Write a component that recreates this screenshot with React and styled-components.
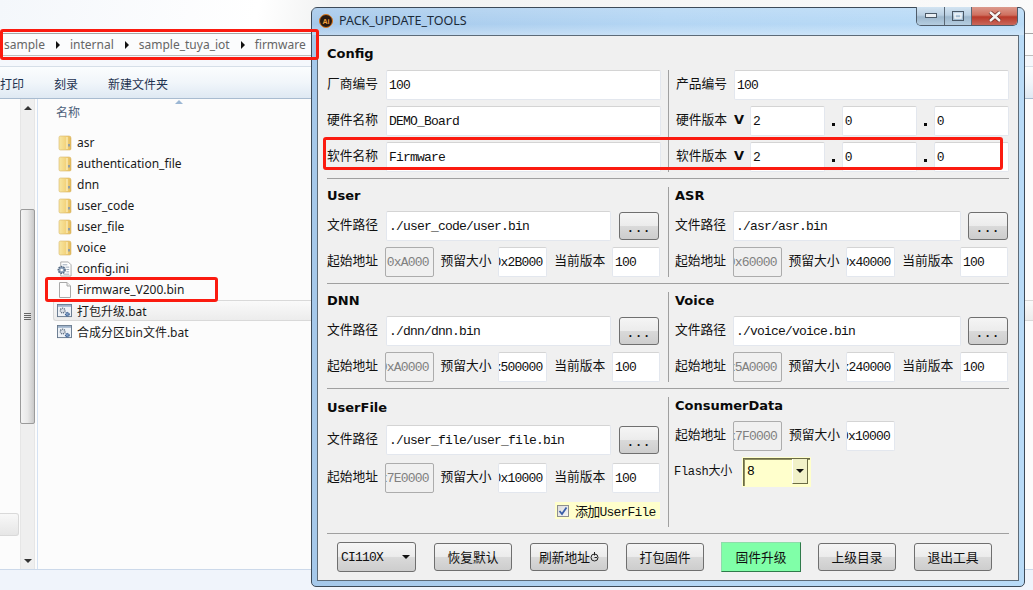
import React from 'react';
import styled, { createGlobalStyle } from 'styled-components';

const CJK = '"Noto Sans CJK SC"';
const UI_FONT = `"Noto Sans", ${CJK}, sans-serif`;
const MONO_FONT = `"Liberation Mono", ${CJK}, monospace`;

const GlobalStyle = createGlobalStyle`
  html, body { margin: 0; padding: 0; background: #fff; }
  * { box-sizing: border-box; }
`;

const Screen = styled.div`
  position: relative;
  width: 1033px;
  height: 590px;
  overflow: hidden;
  font-family: ${UI_FONT};
`;

/* explorer behind the tool window */
const Explorer = styled.div`
  display: flex;
  flex-direction: column;
  height: 590px;
`;

const ExplorerGlass = styled.div`
  height: 33px;
  background: linear-gradient(100deg, #f4f7fb 0%, #ffffff 25%, #f1f2f2 32%, #fafafa 100%);
`;

const AddressBar = styled.div`
  height: 23px;
  display: flex;
  align-items: center;
  padding-left: 4px;
  gap: 8px;
  background: #fbfcfd;
  border-top: 1px solid #a5a5a5;
  border-bottom: 1px solid #bdbdbd;
  font-size: 12px;
  color: #666;
`;

const Crumb = styled.span`
  white-space: nowrap;
`;

const CrumbArrow = styled.span`
  width: 0;
  height: 0;
  margin: 0 2px 0 3px;
  border-left: 4px solid #111;
  border-top: 4px solid transparent;
  border-bottom: 4px solid transparent;
`;

const GlassGap = styled.div`
  height: 10px;
  background: #f5f8fc;
`;

const Toolbar = styled.div`
  height: 33px;
  display: flex;
  align-items: center;
  gap: 30px;
  padding-top: 2px;
  background: linear-gradient(#fbfdfe 0%, #f1f6fa 50%, #dfe9f3 100%);
  border-top: 1px solid #d6dfe8;
  border-bottom: 1px solid #a9bcd0;
  font-size: 12px;
  color: #1e3250;
`;

const Body = styled.div`
  flex: 1;
  display: flex;
  background: #fcfcfc;
  min-height: 0;
`;

const NavPane = styled.div`
  width: 20px;
  padding-top: 414px;
`;

const NavSelected = styled.div`
  width: 19px;
  height: 23px;
  border: 1px solid #d9d9d9;
  border-left: 0;
  border-radius: 0 3px 3px 0;
  background: linear-gradient(#f8f8f8, #e6e6e6);
`;

const ScrollTrack = styled.div`
  width: 15px;
  display: flex;
  flex-direction: column;
  align-items: center;
  background: #efefef;
  border-left: 1px solid #e6e6e6;
  border-right: 1px solid #e6e6e6;
`;

const ScrollUp = styled.div`
  margin-top: 7px;
  border-bottom: 4px solid #333;
  border-left: 4px solid transparent;
  border-right: 4px solid transparent;
`;

const ScrollThumb = styled.div`
  width: 15px;
  height: 215px;
  margin-top: 99px;
  display: flex;
  flex-direction: column;
  align-items: center;
  justify-content: center;
  gap: 1px;
  border: 1px solid #9b9b9b;
  border-radius: 2px;
  background: linear-gradient(90deg, #f4f4f4 0%, #e9e9e9 50%, #c9c9c9 100%);
`;

const Grip = styled.i`
  display: block;
  width: 7px;
  height: 1px;
  background: #666;
`;

const ScrollDown = styled.div`
  margin-top: auto;
  margin-bottom: 6px;
  border-top: 4px solid #333;
  border-left: 4px solid transparent;
  border-right: 4px solid transparent;
`;

const FileList = styled.div`
  flex: 1;
  margin-left: 2px;
  padding-left: 15px;
  border-left: 1px solid #d5e2f3;
`;

const ListHeader = styled.div`
  position: relative;
  height: 33px;
  padding: 5px 0 0 3px;
  font-size: 12px;
  line-height: 18px;
  color: #4c607a;
`;

const SortArrow = styled.div`
  position: absolute;
  left: 122px;
  top: 1px;
  border-bottom: 4px solid #9cb7d4;
  border-left: 4px solid transparent;
  border-right: 4px solid transparent;
`;

const FileRow = styled.div`
  height: 21px;
  display: flex;
  align-items: center;
  gap: 5px;
  padding-left: 3px;
  font-size: 12px;
  color: #1a1a1a;
  white-space: nowrap;
  border: 1px solid ${(p) => (p.$hover ? '#d9d9d9' : 'transparent')};
  border-right: 0;
  border-radius: 3px 0 0 3px;
  background: ${(p) => (p.$hover ? 'linear-gradient(#fafafa, #ececec)' : 'none')};
`;

const IconSlot = styled.div`
  flex: none;
  width: 15px;
  display: flex;
  justify-content: center;
`;

const StatusBar = styled.div`
  height: 21px;
  background: #f0f4fb;
  border-top: 1px solid #ccd9ea;
`;

const RedBox = styled.div`
  position: absolute;
  left: ${(p) => p.$x}px;
  top: ${(p) => p.$y}px;
  width: ${(p) => p.$w}px;
  height: ${(p) => p.$h}px;
  border: 3px solid #fb1b10;
  border-radius: 3px;
  z-index: 5;
  pointer-events: none;
`;

/* PACK_UPDATE_TOOLS window */
const ToolWindow = styled.div`
  position: absolute;
  left: 311px;
  top: 7px;
  width: 714px;
  height: 580px;
  display: flex;
  flex-direction: column;
  padding: 0 5px 5px;
  border: 1px solid #3d4a58;
  border-radius: 6px 6px 5px 5px;
  background: linear-gradient(90deg, #a5c8ea 0%, #b4d6f4 50%, #b9dbf7 100%);
`;

const TitleBar = styled.div`
  height: 27px;
  display: flex;
  align-items: flex-start;
  margin: 0 -5px;
  padding: 0 6px 0 7px;
  background: linear-gradient(rgba(255, 255, 255, 0.15), rgba(255, 255, 255, 0) 60%, rgba(255, 255, 255, 0.3));
`;

const AppIcon = styled.div`
  width: 14px;
  height: 14px;
  margin-top: 6px;
  border-radius: 50%;
  display: flex;
  align-items: center;
  justify-content: center;
  background: #2a1a10;
  border: 1px solid #e07a1c;
  color: #f5a13a;
  font-size: 7px;
  font-weight: 700;
  font-family: "Liberation Sans", sans-serif;
`;

const TitleText = styled.div`
  margin: 4px 0 0 6px;
  font-size: 12.5px;
  line-height: 18px;
  color: #1b2a38;
  flex: 1;
`;

const Controls = styled.div`
  display: flex;
  height: 19px;
  margin-top: -1px;
  border: 1px solid #4f5c6a;
  border-top: 0;
  border-radius: 0 0 5px 5px;
  overflow: hidden;
`;

const CtrlButton = styled.div`
  width: ${(p) => (p.$close ? 46 : 27)}px;
  display: flex;
  align-items: center;
  justify-content: center;
  border-left: ${(p) => (p.$first ? 0 : '1px solid #5a6876')};
  background: ${(p) =>
    p.$close
      ? 'linear-gradient(#dc9a8d 0%, #cf6f5f 45%, #b9392a 55%, #c9675a 100%)'
      : 'linear-gradient(#d3e4f2 0%, #b9cfe2 45%, #9db7cd 55%, #b5cde0 100%)'};
`;

const Client = styled.div`
  height: 546px;
  padding: 8px 9px 0;
  border: 1px solid #5d6b78;
  background: #f0f0f0;
`;

const SectionGrid = styled.div`
  display: grid;
  grid-template-columns: 341px 341px;
`;

const LeftCol = styled.div`
  padding-right: 7px;
`;

const RightCol = styled.div`
  border-left: 1px solid #a0a0a0;
  padding-left: ${(p) => p.$pad || 6}px;
`;

const Heading = styled.div`
  height: ${(p) => p.$h || 18}px;
  margin-bottom: 6px;
  line-height: ${(p) => p.$h || 18}px;
  font-family: "DejaVu Sans", sans-serif;
  font-size: 13px;
  font-weight: 700;
  color: #0a0a0a;
`;

const Stack = styled.div`
  display: flex;
  flex-direction: column;
  gap: ${(p) => p.$gap || 6}px;
`;

const Rule = styled.div`
  height: 1px;
  margin: 6px 0 8px;
  background: #a0a0a0;
`;

const Row = styled.div`
  height: 30px;
  display: flex;
  align-items: center;
  gap: ${(p) => p.$gap || 0}px;
`;

const SpreadRow = styled(Row)`
  justify-content: space-between;
  width: 333px;
`;

const PathRow = styled(Row)`
  padding-right: ${(p) => p.$end}px;
`;

const FieldLabel = styled.div`
  flex: none;
  width: 51px;
  margin-left: ${(p) => p.$left || 0}px;
  font-size: 12.75px;
  line-height: 16px;
  color: #111;
  white-space: nowrap;
  font-family: ${MONO_FONT};
`;

const FlashLabel = styled(FieldLabel)`
  width: 58px;
  margin-left: -1px;
  font-size: 12px;
  letter-spacing: -0.3px;
`;

const Field = styled.div`
  display: flex;
  align-items: center;
  justify-content: ${(p) => (p.$end ? 'flex-end' : 'flex-start')};
  flex: ${(p) => (p.$w ? 'none' : 1)};
  width: ${(p) => (p.$w ? `${p.$w}px` : 'auto')};
  min-width: 0;
  height: 30px;
  margin-left: ${(p) => p.$left || 0}px;
  padding: 0 ${(p) => (p.$end ? 4 : 3)}px 0 ${(p) => (p.$end ? 0 : 2)}px;
  overflow: hidden;
  white-space: nowrap;
  font-family: ${MONO_FONT};
  font-size: 13px;
  letter-spacing: -0.8px;
  border-radius: 2px;
  color: ${(p) => (p.$off ? '#808080' : '#101010')};
  background: ${(p) => (p.$off ? '#f0f0f0' : '#fff')};
  border: 1px solid ${(p) => (p.$off ? '#acacac' : '#e3e7ee')};
  border-top-color: ${(p) => (p.$off ? '#acacac' : '#d4d4d4')};
`;

const VMark = styled.div`
  flex: none;
  width: 16px;
  padding-bottom: 3px;
  font-family: "DejaVu Sans", sans-serif;
  font-weight: 700;
  font-size: 13px;
  margin-left: 7px;
  color: #0a0a0a;
`;

const Dot = styled.div`
  flex: none;
  width: 16.5px;
  height: 30px;
  display: flex;
  align-items: flex-end;
  justify-content: center;
  padding-bottom: 10px;
`;

const DotMark = styled.i`
  display: block;
  width: 3px;
  height: 3px;
  background: #0a0a0a;
`;

const GlossButton = styled.div`
  flex: none;
  display: flex;
  align-items: center;
  justify-content: center;
  width: ${(p) => p.$w || 78}px;
  height: 28px;
  padding-bottom: 1px;
  border: 1px solid #6f6f6f;
  border-radius: 3px;
  font-size: 12.75px;
  color: #111;
  white-space: nowrap;
  background: linear-gradient(#f5f5f5 0%, #ececec 48%, #d9d9d9 52%, #cdcdcd 100%);
`;

const DotsButton = styled(GlossButton)`
  font-family: ${MONO_FONT};
  font-weight: 700;
  font-size: 12px;
  letter-spacing: 1px;
  padding: 5px 0 0;
`;

const ComboButton = styled(GlossButton)`
  justify-content: space-between;
  height: 30px;
  padding: 0 5px 0 3px;
  font-family: ${MONO_FONT};
  font-size: 13px;
  letter-spacing: -0.8px;
`;

const ComboCaret = styled.i`
  display: block;
  border-top: 4px solid #111;
  border-left: 4px solid transparent;
  border-right: 4px solid transparent;
`;

const GreenButton = styled(GlossButton)`
  width: 80px;
  height: 30px;
  margin: -1px;
  border: 1px solid #8fdcaa;
  border-right-color: #2f7a4a;
  border-bottom-color: #2f7a4a;
  border-radius: 0;
  background: #80ffa8;
`;

const CheckRow = styled.div`
  display: flex;
  align-items: center;
  gap: 6px;
  width: 105px;
  height: 17px;
  margin: 1px 0 0 228px;
  padding-left: 2px;
  background: #ffffcc;
  font-family: ${MONO_FONT};
  font-size: 13px;
  letter-spacing: -0.8px;
  color: #111;
`;

const CheckBox = styled.div`
  width: 12px;
  height: 12px;
  display: flex;
  align-items: center;
  justify-content: center;
  border: 1px solid #8e8f8f;
  background: linear-gradient(135deg, #dcdcdc, #f6f6f6);
`;

const ColumnEnd = styled.div`
  height: 8px;
`;

const FlashSelect = styled.div`
  display: flex;
  align-items: center;
  justify-content: space-between;
  width: 69px;
  height: 30px;
  margin-left: 10px;
  padding: 1px 2px 2px 4px;
  background: #ffffcc;
  border: 1px solid #ffffcc;
  font-family: ${MONO_FONT};
  font-size: 13px;
  box-shadow: inset 1px 1px 0 #6b6b45, inset 2px 2px 0 #8f8f60;
`;

const FlashArrow = styled.div`
  width: 16px;
  height: 100%;
  display: flex;
  align-items: center;
  justify-content: center;
  background: #f1f1c8;
  border-right: 1px solid #6b6b45;
  border-bottom: 1px solid #6b6b45;
  border-left: 1px solid #fff;
`;

const ActionBar = styled.div`
  display: flex;
  align-items: center;
  gap: 18px;
  height: 30px;
  padding-left: 10px;
`;

function FolderIcon() {
  return (
    <svg width="14" height="16" viewBox="0 0 14 16">
      <defs>
        <linearGradient id="fold" x1="0" x2="1" y1="0" y2="0">
          <stop offset="0" stopColor="#f7e7a4" />
          <stop offset="0.6" stopColor="#f3d27a" />
          <stop offset="1" stopColor="#e2b95a" />
        </linearGradient>
      </defs>
      <path d="M1 2.5 Q1 1 2.5 1 H11 Q13 1 13 3 V14 Q13 15 11.5 15 H2.5 Q1 15 1 13.5 Z" fill="url(#fold)" stroke="#d8b768" strokeWidth="0.6" />
      <path d="M9 2 V14" stroke="#fff6cf" strokeWidth="1" />
      <path d="M11 9 V11.5" stroke="#6d8fc0" strokeWidth="1.4" />
    </svg>
  );
}

function ConfigIcon() {
  return (
    <svg width="15" height="16" viewBox="0 0 16 16">
      <path d="M4 .5 H12 L15 3.5 V15.5 H4 Z" fill="#fff" stroke="#a9a9a9" />
      <path d="M9 6 H13 M10 8.5 H13 M10 11 H13 M7 13.5 H13 M6 3.5 H11" stroke="#9aa7b8" />
      <circle cx="5" cy="9" r="3.6" fill="#8ba0ba" stroke="#54687f" strokeDasharray="1.6 1" strokeWidth="1.6" />
      <circle cx="5" cy="9" r="1.4" fill="#fff" />
    </svg>
  );
}

function FileIcon() {
  return (
    <svg width="14" height="16" viewBox="0 0 14 16">
      <path d="M1.5 .5 H9 L12.5 4 V15.5 H1.5 Z" fill="#fdfdfd" stroke="#a8a8a8" />
      <path d="M9 .5 V4 H12.5" fill="#ececec" stroke="#a8a8a8" />
    </svg>
  );
}

function BatIcon() {
  return (
    <svg width="15" height="14" viewBox="0 0 16 15">
      <rect x="0.5" y="0.5" width="15" height="13" fill="#eef2f7" stroke="#65778c" />
      <rect x="1" y="1" width="14" height="2" fill="#9fb3cb" />
      <circle cx="6" cy="7" r="2.5" fill="#d8dee6" stroke="#5f6f82" strokeDasharray="1.2 .8" strokeWidth="1.4" />
      <circle cx="11" cy="11" r="2" fill="#7d9cc4" stroke="#34588a" strokeDasharray="1 .7" strokeWidth="1.2" />
    </svg>
  );
}

function RefreshMark() {
  return (
    <svg width="9" height="10" viewBox="0 0 9 10">
      <circle cx="4.5" cy="5.5" r="3.5" fill="none" stroke="#222" />
      <path d="M4.5 0 V3.5 M4.5 5.5 H7" stroke="#222" />
    </svg>
  );
}

const FILES = [
  { name: 'asr', icon: FolderIcon },
  { name: 'authentication_file', icon: FolderIcon },
  { name: 'dnn', icon: FolderIcon },
  { name: 'user_code', icon: FolderIcon },
  { name: 'user_file', icon: FolderIcon },
  { name: 'voice', icon: FolderIcon },
  { name: 'config.ini', icon: ConfigIcon },
  { name: 'Firmware_V200.bin', icon: FileIcon },
  { name: '打包升级.bat', icon: BatIcon, hover: true },
  { name: '合成分区bin文件.bat', icon: BatIcon },
];

function ExplorerPane() {
  return (
    <Explorer>
      <ExplorerGlass />
      <AddressBar>
        <Crumb>sample</Crumb>
        <CrumbArrow />
        <Crumb>internal</Crumb>
        <CrumbArrow />
        <Crumb>sample_tuya_iot</Crumb>
        <CrumbArrow />
        <Crumb>firmware</Crumb>
      </AddressBar>
      <GlassGap />
      <Toolbar>
        <span>打印</span>
        <span>刻录</span>
        <span>新建文件夹</span>
      </Toolbar>
      <Body>
        <NavPane>
          <NavSelected />
        </NavPane>
        <ScrollTrack>
          <ScrollUp />
          <ScrollThumb>
            <Grip />
            <Grip />
            <Grip />
            <Grip />
          </ScrollThumb>
          <ScrollDown />
        </ScrollTrack>
        <FileList>
          <ListHeader>
            名称
            <SortArrow />
          </ListHeader>
          {FILES.map((f) => (
            <FileRow key={f.name} $hover={f.hover}>
              <IconSlot><f.icon /></IconSlot>
              <span>{f.name}</span>
            </FileRow>
          ))}
        </FileList>
      </Body>
      <StatusBar />
    </Explorer>
  );
}

function VersionRow({ label }) {
  return (
    <Row>
      <FieldLabel>{label}</FieldLabel>
      <VMark>V</VMark>
      <Field>2</Field>
      <Dot><DotMark /></Dot>
      <Field>0</Field>
      <Dot><DotMark /></Dot>
      <Field>0</Field>
    </Row>
  );
}

function TextRow({ label, value, gap }) {
  return (
    <Row $gap={gap}>
      <FieldLabel>{label}</FieldLabel>
      <Field>{value}</Field>
    </Row>
  );
}

function PathLine({ value, right }) {
  return (
    <PathRow $gap={right ? 7 : 8} $end={right ? 1 : 2}>
      <FieldLabel>文件路径</FieldLabel>
      <Field>{value}</Field>
      <DotsButton $w={40}>...</DotsButton>
    </PathRow>
  );
}

function AddressLine({ start, size }) {
  return (
    <SpreadRow>
      <FieldLabel>起始地址</FieldLabel>
      <Field $w={49} $off $end>{start}</Field>
      <FieldLabel>预留大小</FieldLabel>
      <Field $w={49} $end>{size}</Field>
      <FieldLabel>当前版本</FieldLabel>
      <Field $w={48}>100</Field>
    </SpreadRow>
  );
}

function BinSection({ title, path, start, size, right }) {
  return (
    <div>
      <Heading>{title}</Heading>
      <Stack>
        <PathLine value={path} right={right} />
        <AddressLine start={start} size={size} />
      </Stack>
    </div>
  );
}

function ToolPane() {
  return (
    <ToolWindow>
      <TitleBar>
        <AppIcon>Ai</AppIcon>
        <TitleText>PACK_UPDATE_TOOLS</TitleText>
        <Controls>
          <CtrlButton $first>
            <svg width="12" height="6" viewBox="0 0 12 6">
              <rect x="0.5" y="0.5" width="11" height="4" fill="#e9eef3" stroke="#4a5866" />
            </svg>
          </CtrlButton>
          <CtrlButton>
            <svg width="12" height="10" viewBox="0 0 12 10">
              <rect x="0.5" y="0.5" width="11" height="9" fill="none" stroke="#4a5866" />
              <rect x="3" y="3" width="6" height="4" fill="none" stroke="#f2f6fa" strokeWidth="1.5" />
            </svg>
          </CtrlButton>
          <CtrlButton $close>
            <svg width="14" height="11" viewBox="0 0 14 11">
              <path d="M2 1 L12 10 M12 1 L2 10" stroke="#6b2a22" strokeWidth="4" />
              <path d="M2 1 L12 10 M12 1 L2 10" stroke="#f4f4f4" strokeWidth="2.4" />
            </svg>
          </CtrlButton>
        </Controls>
      </TitleBar>

      <Client>
        <Heading $h={20}>Config</Heading>
        <SectionGrid>
          <LeftCol>
            <Stack>
              <TextRow label="厂商编号" value="100" gap={8} />
              <TextRow label="硬件名称" value="DEMO_Board" gap={8} />
              <TextRow label="软件名称" value="Firmware" gap={8} />
            </Stack>
          </LeftCol>
          <RightCol $pad={7}>
            <Stack>
              <TextRow label="产品编号" value="100" gap={7} />
              <VersionRow label="硬件版本" />
              <VersionRow label="软件版本" />
            </Stack>
          </RightCol>
        </SectionGrid>
        <Rule />

        <SectionGrid>
          <LeftCol>
            <BinSection title="User" path="./user_code/user.bin" start="0xA000" size="0x2B000" />
          </LeftCol>
          <RightCol>
            <BinSection right title="ASR" path="./asr/asr.bin" start="0x60000" size="0x40000" />
          </RightCol>
        </SectionGrid>
        <Rule />

        <SectionGrid>
          <LeftCol>
            <BinSection title="DNN" path="./dnn/dnn.bin" start="0xA0000" size="0x500000" />
          </LeftCol>
          <RightCol>
            <BinSection right title="Voice" path="./voice/voice.bin" start="0x5A0000" size="0x240000" />
          </RightCol>
        </SectionGrid>
        <Rule />

        <SectionGrid>
          <LeftCol>
            <Heading $h={22}>UserFile</Heading>
            <Stack $gap={8}>
              <PathLine value="./user_file/user_file.bin" />
              <AddressLine start="0x7E0000" size="0x10000" />
              <CheckRow>
                <CheckBox>
                  <svg width="10" height="10" viewBox="0 0 10 10">
                    <path d="M1.5 5 L4 8 L8.5 1.5" fill="none" stroke="#3a5fa8" strokeWidth="1.8" />
                  </svg>
                </CheckBox>
                添加UserFile
              </CheckRow>
            </Stack>
            <ColumnEnd />
          </LeftCol>
          <RightCol>
            <Heading>ConsumerData</Heading>
            <Stack>
              <Row>
                <FieldLabel>起始地址</FieldLabel>
                <Field $w={49} $off $end $left={7}>0x7F0000</Field>
                <FieldLabel $left={7}>预留大小</FieldLabel>
                <Field $w={49} $end $left={6}>0x10000</Field>
              </Row>
              <Row>
                <FlashLabel>Flash大小</FlashLabel>
                <FlashSelect>
                  8
                  <FlashArrow><ComboCaret /></FlashArrow>
                </FlashSelect>
              </Row>
            </Stack>
          </RightCol>
        </SectionGrid>
        <Rule />

        <ActionBar>
          <ComboButton $w={79}>
            CI110X
            <ComboCaret />
          </ComboButton>
          <GlossButton>恢复默认</GlossButton>
          <GlossButton>刷新地址<RefreshMark /></GlossButton>
          <GlossButton>打包固件</GlossButton>
          <GreenButton>固件升级</GreenButton>
          <GlossButton>上级目录</GlossButton>
          <GlossButton>退出工具</GlossButton>
        </ActionBar>
      </Client>
    </ToolWindow>
  );
}

export default function App() {
  return (
    <Screen>
      <GlobalStyle />
      <ExplorerPane />
      <ToolPane />
      <RedBox $x={0} $y={29} $w={319} $h={31} />
      <RedBox $x={45} $y={277} $w={173} $h={25} />
      <RedBox $x={323} $y={137} $w={680} $h={33} />
    </Screen>
  );
}
